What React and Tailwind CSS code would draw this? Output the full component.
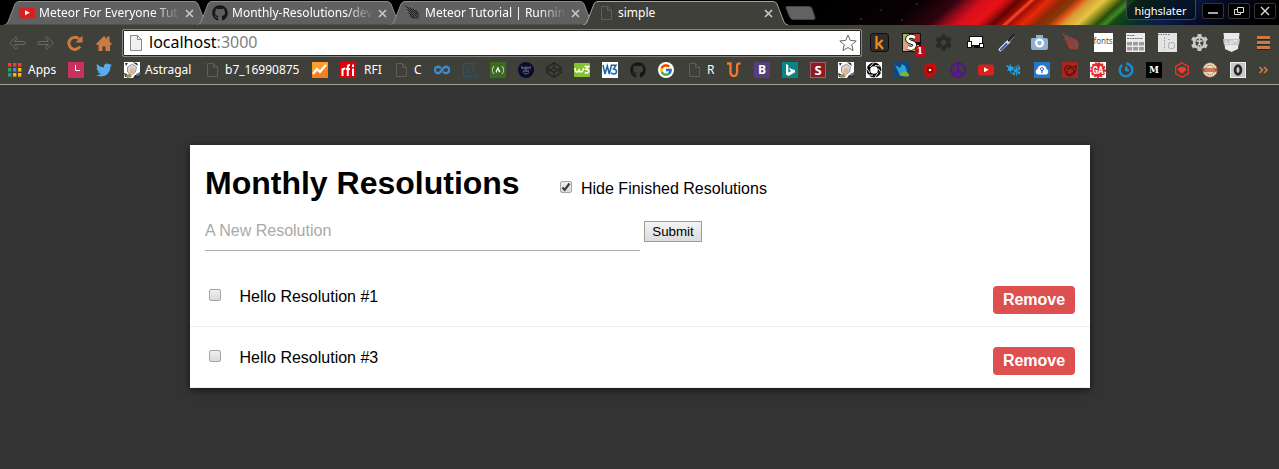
import React from "react";
import { FaTwitter, FaGithub, FaFreeCodeCamp, FaCodepen, FaCog } from "react-icons/fa";
import { FcGoogle } from "react-icons/fc";

const Svg = ({ s = "h-4 w-4", vb = "0 0 16 16", children }) => (
  <svg viewBox={vb} className={s + " shrink-0"} fill="none">{children}</svg>
);

const Letter = ({ bg, fg = "#fff", t, size = 12, x = 8, y = 12.3, font = "Open Sans, sans-serif", rx = 0, weight = 700 }) => (
  <Svg>
    <rect width="16" height="16" rx={rx} fill={bg} />
    <text x={x} y={y} fontSize={size} fontWeight={weight} fill={fg} textAnchor="middle" fontFamily={font}>{t}</text>
  </Svg>
);

const Doc = () => (
  <Svg><path d="M3.5 1.5h6l4 4v9h-10zM9.5 1.5v4h4" stroke="#5d5e58" /></Svg>
);

const YouTube = () => (
  <Svg>
    <rect y="2.5" width="16" height="11" rx="2" fill="#d9201f" />
    <path d="M6 5.2v5l4.8-2.5z" fill="#fff" />
  </Svg>
);

const Meteor = ({ c = "#171717", s = "h-4 w-4" }) => (
  <Svg s={s}>
    <path d="M.5.5l13 13M4 2l9.800 10M2 4l9.800 9.800M7.500 3.500l6.300 6.700M3.500 7.500l6.500 6.300M10.500 5l3 3.300M5 10.500l3.200 3" stroke={c} strokeWidth=".95" />
  </Svg>
);

const Painter = () => (
  <Svg>
    <rect width="16" height="16" fill="#fff" />
    <path d="M1 1h3L2 4zM9 0l4 1 1 3-3-2zM0 11l3 1 1 3H1zM11 13l5 0v3H9z" fill="#35332f" />
    <path d="M3.500 5l5-3 4 3-1 5-4 3-4-3z" fill="#d3d4d8" stroke="#77757a" strokeWidth=".7" />
    <path d="M6 7l3-1 2 3-2 2-3 0z" fill="#e3b48d" />
    <path d="M1 13l5-1 2 3-5 1z" fill="#9a8b51" />
    <path d="M12 12l4-2v3l-3 1z" fill="#5577a8" />
  </Svg>
);

const Apps = () => (
  <Svg>
    {["#ea4335", "#ea4335", "#ea4335", "#22a565", "#4285f4", "#fbb405", "#22a565", "#fbb405", "#fbb405"].map((c, i) => (
      <rect key={i} x={2 + (i % 3) * 5} y={1 + Math.floor(i / 3) * 5} width="3.4" height="3.6" fill={c} />
    ))}
  </Svg>
);

const Peace = () => (
  <Svg><g stroke="#5b0f96" strokeWidth="1.8"><circle cx="8" cy="8" r="7" /><path d="M8 1v14M8 8l-5 5M8 8l5 5" /></g></Svg>
);

const bookmarks = [
  { w: "w-[50px]", label: "Apps", gap: "gap-1.5", icon: <Apps /> },
  { icon: (
    <Svg><rect width="16" height="16" fill="#c9315a" /><path d="M7.5 3v5.5h4.5" stroke="#fff" /></Svg>
  ) },
  { icon: <FaTwitter className="h-4 w-4 shrink-0 text-[#55acee]" /> },
  { w: "w-[68px]", label: "Astragal", icon: <Painter /> },
  { w: "w-[96px]", label: "b7_16990875", icon: <Doc /> },
  { icon: (
    <Svg><rect width="16" height="16" fill="#f48120" /><path d="M0 0h16v4L0 12z" fill="#f9a02c" /><path d="M1 12l4-5 3 3 6-7" stroke="#fff" strokeWidth="2.2" /></Svg>
  ) },
  { w: "w-[41px]", label: "RFI", gap: "gap-2", icon: (
    <Svg>
      <rect width="16" height="16" fill="#e2000b" />
      <path d="M2.500 14V6.500M2.500 8.500q0-2 3-2M7.800 14V5q0-2 2.200-2M6 7h4M13 6.500V14M13 2.500v2.500" stroke="#fff" strokeWidth="2" />
    </Svg>
  ) },
  { w: "w-[29px]", label: "C", icon: <Doc /> },
  { icon: (
    <Svg><path d="M7 6.200Q5.700 4.800 4 4.800a3.200 3.200 0 0 0 0 6.400c3.500 0 4.500-6.400 8-6.400a3.200 3.200 0 0 1 0 6.400Q10.300 11.200 9 9.800" stroke="#3f8bc9" strokeWidth="2.400" /></Svg>
  ) },
  { icon: (
    <Svg>
      <path d="M10.500 14.500h-9V1.500h10v8.500M12.500 14.500H16" stroke="#2a536b" strokeWidth="1.300" />
      <path d="M8.500 6q-3.500-1-3.500 2.200T8.500 10.500" stroke="#2a536b" strokeWidth="1.500" />
    </Svg>
  ) },
  { icon: (
    <span className="flex h-4 w-4 items-center justify-center bg-[#3c6a20]"><FaFreeCodeCamp className="h-3 w-3 text-white" /></span>
  ) },
  { icon: (
    <Svg>
      <circle cx="8" cy="8" r="8" fill="#0b0a33" />
      <path d="M3 3.500l2 1.500q3-1 6 0l2-1.500v3l-2 1v3.500q-3 3-6 0V7.500l-2-1z" fill="#50535c" />
      <path d="M5 7l2 1M11 7l-2 1M6 11q2-1.500 4 0" stroke="#0b0a33" strokeWidth="1.200" />
    </Svg>
  ) },
  { icon: <FaCodepen className="h-4 w-4 shrink-0 text-[#262723]" /> },
  { icon: (
    <Svg>
      <rect y="1" width="16" height="14" rx="1" fill="#88c130" />
      <path d="M1 6q0 4 2 4t2-3q0 3 2 3t2.500-4M10.500 4.500h4L12 7.300q2.700 0 2.700 2t-4 1.800" stroke="#fff" strokeWidth="1.500" />
    </Svg>
  ) },
  { icon: (
    <Svg>
      <rect width="16" height="16" fill="#fff" />
      <path d="M1 3l2 9 2.300-8 2 8L9.500 3M9 3.300h5L11.500 7q3 .2 3 2.500T12 12t-2.500-1.500" stroke="#1565a9" strokeWidth="1.500" />
    </Svg>
  ) },
  { icon: <FaGithub className="h-4 w-4 shrink-0 text-[#171717]" /> },
  { icon: (
    <span className="flex h-4 w-4 items-center justify-center rounded-full bg-white"><FcGoogle className="h-3.5 w-3.5" /></span>
  ) },
  { w: "w-[28px]", label: "R", icon: <Doc /> },
  { icon: (
    <Svg><path d="M1 1.500h3.500V9.500q0 4.500 3.300 4.500t3.300-4.500V3q0-1.500 3.500-1.700" stroke="#f4792a" strokeWidth="2.300" /></Svg>
  ) },
  { icon: <Letter bg="#563d7c" t="B" rx={2} /> },
  { icon: (
    <Svg><rect width="16" height="16" fill="#0a8484" /><path d="M4 2l2.300 1v7.500l3-1.500-1.500-1L7 6l6 2.200v2L6.500 14 4 12.500z" fill="#fff" /></Svg>
  ) },
  { icon: (
    <Svg>
      <rect width="16" height="16" fill="#8b1c22" /><rect x=".5" y=".5" width="15" height="15" stroke="#c9a0a2" strokeDasharray="1 1" />
      <text x="8" y="12.600" fontSize="13" fontWeight="700" fill="#fff" textAnchor="middle" fontFamily="Open Sans, sans-serif">S</text>
    </Svg>
  ) },
  { icon: <Painter /> },
  { icon: (
    <Svg>
      <rect width="16" height="16" fill="#fff" />
      <circle cx="8" cy="8" r="5.600" stroke="#0c0c0c" strokeWidth="3.600" />
      <path d="M8 .5L4 5M14.500 4L9 3.500M15.500 11L12 6.500M9 15.500l3-5M2 13l5 .2M.5 6l3.500 5" stroke="#fff" strokeWidth=".9" />
    </Svg>
  ) },
  { icon: (
    <Svg>
      <rect width="16" height="16" fill="#16457c" />
      <path d="M1 3l5 3 2-4 3 2 2 5-3 4-4 1-2-5z" fill="#27a3e3" /><path d="M6 13q3-5 6-3.500T15 14q-4 1.500-9-1z" fill="#7db62c" />
    </Svg>
  ) },
  { icon: (
    <Svg>
      <path d="M14 1Q8 0 4 2.500T2.500 9q0 3 3 4.500-2 1-4 1 8 2.500 11.500-2.500t0-8.500q0-1.500 1-2.500z" fill="#c80b0b" />
      <circle cx="8" cy="8" r="3.200" fill="#8c0505" /><circle cx="8" cy="8" r="1.300" fill="#fff" />
    </Svg>
  ) },
  { icon: <Peace /> },
  { icon: <YouTube /> },
  { icon: (
    <Svg>
      <g stroke="#2599d6" strokeWidth=".9"><path d="M1 4l13 8M1 9l12-6M4.500 2v9M6 7l8 0M5 12l9-6M10.500 5v9M13 4v8" /></g>
      <g fill="#2ba0e0"><circle cx="4.500" cy="6.500" r="2.600" /><circle cx="10" cy="9" r="1.800" /><circle cx="13" cy="6" r="1.300" /><circle cx="8" cy="12" r="1.200" /><circle cx="13" cy="11" r="1.200" /><circle cx="1.500" cy="4" r="1" /></g>
    </Svg>
  ) },
  { icon: (
    <Svg>
      <rect width="16" height="16" fill="#2878c9" />
      <path d="M3.500 12.500a3 3 0 0 1 0-5.500 4.600 4.600 0 0 1 9 0 3 3 0 0 1 0 5.500z" fill="#fff" />
      <path d="M8 11V8" stroke="#2878c9" strokeWidth="1.300" /><circle cx="8" cy="7" r="1.500" stroke="#2878c9" />
    </Svg>
  ) },
  { icon: (
    <Svg>
      <rect width="16" height="16" rx="1" fill="#a9261f" />
      <path d="M2 8q2-6 6-4t6 0q0 9-6 10-5-1-5-6M5 7q3-3 6 0t-2 5-4-3 4-2" stroke="#5c1210" strokeWidth="1.100" />
    </Svg>
  ) },
  { icon: (
    <Svg>
      <rect width="16" height="16" fill="#fff" />
      <circle cx="8" cy="8" r="6.900" fill="#e3272d" /><circle cx="8" cy="8" r="7.200" stroke="#e3272d" strokeWidth="1.500" strokeDasharray="2 1.400" />
      <text x="8" y="11.600" fontSize="10" fontWeight="700" fill="#fff" textAnchor="middle" textLength="11" lengthAdjust="spacingAndGlyphs" fontFamily="Roboto, sans-serif">GA</text>
    </Svg>
  ) },
  { icon: (
    <Svg><path d="M4.200 3A6.300 6.300 0 1 0 12 3.200M8 1.500q2.200 0 4 1.700M8.300 9V4.500M8 8.300h3" stroke="#1c8ac7" strokeWidth="2.500" /></Svg>
  ) },
  { icon: <Letter bg="#000" t="M" size={9} y={11.3} font="DejaVu Serif, serif" /> },
  { icon: (
    <Svg><path d="M8 .8l6.300 3.600v7.200L8 15.200l-6.300-3.600V4.400z" stroke="#e5352c" strokeWidth="1.400" /><path d="M5.500 5h5l2 2.500L8 11.800 3.500 7.500z" fill="#f13b31" /></Svg>
  ) },
  { icon: (
    <Svg>
      <circle cx="8" cy="8" r="7.200" fill="#e8dcc0" stroke="#b06b3a" strokeDasharray="1.500 1" />
      <circle cx="8" cy="8" r="4.700" stroke="#7b4c36" strokeDasharray="1 1" /><path d="M1 6.300h14v3.400H1z" fill="#c34d31" /><path d="M3 8h10" stroke="#f0d7c0" strokeDasharray="1 .7" />
    </Svg>
  ) },
  { icon: (
    <Svg>
      <rect width="16" height="16" fill="#c9c9c9" /><rect x=".5" y=".5" width="15" height="15" stroke="#eee" />
      <ellipse cx="8" cy="8" rx="2.900" ry="4.300" stroke="#292929" strokeWidth="2.800" />
    </Svg>
  ) },
];

const S20 = "h-[19px] w-[19px]";
const extensions = [
  <Svg s={S20} vb="0 0 19 19">
    <rect x=".5" y=".5" width="18" height="18" rx="3" fill="#2d2d2d" stroke="#0c0c0c" />
    <path d="M6.500 3v13M12.500 7l-5 5M8.500 10.500l4.500 5.500" stroke="#f28a1a" strokeWidth="2.200" />
  </Svg>,
  <span className="relative">
    <Svg s={S20} vb="0 0 19 19">
      <rect width="19" height="19" fill="#111" /><path d="M1 1h9v8H1z" fill="#a7b85c" /><path d="M10 1h8v8h-8z" fill="#b93528" /><path d="M1 9h8v9H1z" fill="#e0a284" /><path d="M9 12h8v6H9z" fill="#e9c40c" />
      <path d="M13 4.500Q7 2 5.800 5t3.500 4.200 3 4.300-6.800 1" stroke="#111" strokeWidth="4.600" /><path d="M13 4.500Q7 2 5.800 5t3.500 4.200 3 4.300-6.800 1" stroke="#fff" strokeWidth="3" />
    </Svg>
    <span className="absolute left-[13px] top-[13px] flex h-[11px] w-[11px] items-center justify-center rounded-xs bg-[#b30f22] font-['DejaVu_Serif',serif] text-[9px] font-bold leading-none text-white">1</span>
  </span>,
  <FaCog className="h-[17px] w-[17px] text-[#2a2a28]" />,
  <Svg s={S20} vb="0 0 19 19">
    <path d="M8 12h5v3H8z" fill="#0c0c0c" />
    <g fill="#fff" stroke="#0c0c0c"><rect x="3.500" y="3.500" width="13" height="9" /><rect x="1.500" y="8.500" width="4" height="6" /><rect x="13.500" y="10.500" width="4" height="4" /></g>
    <path d="M6 10h7v2H6z" fill="#fff" />
  </Svg>,
  <Svg s={S20} vb="0 0 19 19">
    <path d="M2.500 16.500l8-8" stroke="#dce4f4" strokeWidth="3.600" strokeLinecap="round" /><path d="M3 16.500l5.500-5.500" stroke="#3858b9" strokeWidth="2.200" strokeLinecap="round" /><path d="M11 7.500l4.500-5.500" stroke="#23272d" strokeWidth="2.600" strokeLinecap="round" /><path d="M11.500 8.500l5-5" stroke="#8d959d" strokeWidth=".8" />
  </Svg>,
  <Svg s={S20} vb="0 0 19 19">
    <path d="M2 5h4V2h7v3h3q2 0 2 2v8q0 2-2 2H3q-2 0-2-2V7q0-2 1-2z" fill="#8fb0d0" /><circle cx="9.500" cy="10" r="3.400" stroke="#fff" strokeWidth="2.200" />
  </Svg>,
  <Meteor c="#b0403f" s={S20} />,
  <span className="flex h-[19px] w-[19px] justify-center overflow-hidden bg-white font-['Noto_Sans',sans-serif] text-[8px] leading-[15px] text-[#555]">fonts</span>,
  <Svg s={S20} vb="0 0 19 19">
    <rect width="19" height="19" fill="#ececec" /><path d="M1 2.500h8M1 5.500h16" stroke="#777" strokeDasharray="2 .6" />
    <g fill="#9c9c9c"><path d="M1 9h5v3.500H1zM7 9h5v3.500H7zM13 9h5v3.500h-5zM1 14h5v3.500H1zM7 14h5v3.500H7zM13 14h5v3.500h-5z" /></g>
  </Svg>,
  <Svg s={S20} vb="0 0 19 19">
    <rect width="19" height="19" fill="#e4e4e4" /><path d="M0 1.500h12" stroke="#777" strokeDasharray="1.500 1" /><path d="M6.500 4v13M10 6.500h3" stroke="#aaa" strokeDasharray="2 1" /><rect x="10.500" y="9.500" width="6" height="6" rx="2" stroke="#aaa" />
  </Svg>,
  <Svg s={S20} vb="0 0 19 19">
    <g fill="#c9c9c9"><rect x="7.500" y="1" width="4" height="17" /><rect x="7.500" y="1" width="4" height="17" transform="rotate(60 9.500 9.500)" /><rect x="7.500" y="1" width="4" height="17" transform="rotate(120 9.500 9.500)" /><circle cx="9.500" cy="9.500" r="6.600" /></g>
    <circle cx="9.500" cy="9.500" r="4" fill="#454640" /><path d="M6.500 8h6M9.500 8v2.500l-1.500 2.500M9.500 10.500l1.500 2.500M9.500 5.500v1.500" stroke="#ddd" strokeWidth="1.300" />
  </Svg>,
  <Svg s={S20} vb="0 0 19 19">
    <path d="M1.500 0h16l-1.500 16-6.500 3L3 16z" fill="#e9e9e9" /><path d="M1 6h17l-1 6H2z" fill="#c4c4c4" />
    <path d="M4 7.500v3h2M8 7.500v3h2v-3M12 10.500v-3h3v3" stroke="#eee" />
  </Svg>,
  <Svg s="h-[16px] w-[15px]" vb="0 0 15 16">
    <path d="M1 1h13v3H1zM1 6h13v3H1zM1 11h13v3H1z" fill="#cb7b41" /><path d="M1 4.500h13M1 9.500h13M1 14.500h13" stroke="#272721" />
  </Svg>,
];

const tabs = [
  { title: "Meteor For Everyone Tut", icon: <YouTube /> },
  { title: "Monthly-Resolutions/dev", icon: <FaGithub className="h-4 w-4 shrink-0 text-[#171717]" /> },
  { title: "Meteor Tutorial | Runnin", icon: <Meteor /> },
  { title: "simple", active: true, icon: <Doc /> },
];

const Tab = ({ title, icon, active }) => (
  <div className={"relative -mr-[14px] h-[25px] w-[207px] shrink-0 " + (active ? "z-10" : "")}>
    <svg viewBox="0 0 207 25" className="absolute inset-0 h-[25px] w-[207px]" fill="none">
      <path
        d="M1 25q3-.5 4-3L12 4q1-2.500 4-2.500h175q3 0 4 2.500l7 18q1 2.500 4 3"
        fill={active ? "#3f4039" : "#606060"}
        stroke={active ? "#a4a49f" : "#8c8c8c"}
      />
      {!active && <path d="M2 24.500h203" stroke="#50514b" />}
    </svg>
    <div className="relative flex h-[25px] items-center gap-1 pl-[16px] pt-px">
      {icon}
      <span className={"w-[142px] whitespace-nowrap text-[12px] leading-4 text-white " + (active ? "" : "[mask-image:linear-gradient(to_right,#000_80%,transparent)]")}>{title}</span>
      <svg viewBox="0 0 9 9" className="h-[9px] w-[9px] shrink-0"><path d="M1 1l7 7M8 1L1 8" stroke="#c8c8c8" strokeWidth="1.600" /></svg>
    </div>
  </div>
);

const Theme = () => (
  <svg viewBox="0 0 460 25" preserveAspectRatio="none" className="absolute right-0 top-0 h-[25px] w-[460px]">
    <defs>
      <linearGradient id="glow" gradientUnits="userSpaceOnUse" x1="0" y1="0" x2="460" y2="0" gradientTransform="skewX(-48)">
        <stop offset="0" stopColor="#000" />
        <stop offset=".22" stopColor="#080103" />
        <stop offset=".30" stopColor="#30040e" />
        <stop offset=".33" stopColor="#900a1c" />
        <stop offset=".36" stopColor="#d80f1c" />
        <stop offset=".40" stopColor="#e81214" />
        <stop offset=".42" stopColor="#a50b10" />
        <stop offset=".435" stopColor="#5e0504" />
        <stop offset=".455" stopColor="#a00c05" />
        <stop offset=".463" stopColor="#ff4a28" />
        <stop offset=".473" stopColor="#a00e04" />
        <stop offset=".50" stopColor="#e82a0a" />
        <stop offset=".53" stopColor="#8c2803" />
        <stop offset=".555" stopColor="#843a08" />
        <stop offset=".572" stopColor="#e24e14" />
        <stop offset=".588" stopColor="#d59a30" />
        <stop offset=".62" stopColor="#e6c644" />
        <stop offset=".642" stopColor="#8a8a1c" />
        <stop offset=".662" stopColor="#254c0e" />
        <stop offset=".68" stopColor="#3f8a28" />
        <stop offset=".692" stopColor="#154a12" />
        <stop offset=".74" stopColor="#08302a" />
        <stop offset=".80" stopColor="#081e48" />
        <stop offset=".88" stopColor="#050b26" />
        <stop offset="1" stopColor="#000" />
      </linearGradient>
    </defs>
    <rect width="460" height="25" fill="url(#glow)" />
    <g fill="#998"><circle cx="42" cy="19" r=".6" /><circle cx="62" cy="10" r=".5" /><circle cx="83" cy="20" r=".5" /><circle cx="98" cy="4" r=".6" /><circle cx="256" cy="12" r=".7" /></g>
  </svg>
);

const WinButton = ({ children }) => (
  <span className="flex h-4 w-[22px] items-center justify-center rounded-xs border border-[#333] bg-black">{children}</span>
);

const Check = ({ checked }) => (
  <span className="flex h-3 w-3 shrink-0 items-center justify-center rounded-xs border border-[#a5a5a5] bg-linear-to-b from-[#eeeeee] to-[#dadada]">
    {checked && <svg viewBox="0 0 10 10" className="h-2.5 w-2.5 shrink-0" fill="none"><path d="M1.500 5.500l2.200 2.300L8.500 1.500" stroke="#3c3c3c" strokeWidth="2.200" /></svg>}
  </span>
);

const Arrow = ({ flip }) => (
  <svg viewBox="0 0 18 16" className={"h-4 w-[18px] " + (flip ? "-scale-x-100" : "")} fill="none">
    <path d="M1.500 8L8 1.800l1.500 1.500L6.500 6.500H16q1 0 1 1.500t-1 1.500H6.500l3 3.200L8 14.200z" stroke="#6d6860" />
  </svg>
);

export default function App() {
  return (
    <div className="flex h-[469px] w-[1279px] flex-col overflow-hidden bg-[#333] font-['Liberation_Sans',Arial,sans-serif]">
      <header className="flex h-[85px] shrink-0 flex-col border-b border-[#a0a19b] bg-[#3f4039] font-['Noto_Sans',sans-serif]">
        <div className="relative flex h-[25px] shrink-0 bg-black pl-[3px]">
          <Theme />
          {tabs.map((t) => <Tab key={t.title} {...t} />)}
          <svg viewBox="0 0 32 16" className="relative ml-[9px] mt-[5px] h-4 w-8" fill="none">
            <path d="M3 1.500h22q2 0 3 2l3 9q.5 2-1.500 2H9q-2 0-3-2L2 3q-.5-1.500 1-1.500z" fill="#626262" stroke="#454545" />
          </svg>
          <div className="relative ml-auto flex items-start gap-[6px] pt-[3px]">
            <span className="-mt-[3px] flex h-5 w-[70px] items-center justify-center rounded-b border border-t-0 border-[#3d4750] bg-[#050d18]/60 pr-px pt-[3px] text-[11px] text-white">highslater</span>
            <div className="flex gap-1 pr-[3px]">
              <WinButton><svg viewBox="0 0 10 10" className="h-2.5 w-2.5"><path d="M0 7h10" stroke="#ddd" strokeWidth="1.500" /></svg></WinButton>
              <WinButton><svg viewBox="0 0 10 10" className="h-2.5 w-2.5" fill="none"><path d="M3.500 6.500v-5h6v5zM6.500 6.500v2h-6v-5h3" stroke="#ddd" /></svg></WinButton>
              <WinButton><svg viewBox="0 0 10 10" className="h-2.5 w-2.5"><path d="M1 1l8 8M9 1L1 9" stroke="#ddd" strokeWidth="1.400" /></svg></WinButton>
            </div>
          </div>
        </div>
        <div className="flex h-[35px] shrink-0 items-center">
          <nav className="flex w-[122px] items-center pl-2">
            <Arrow />
            <span className="ml-[11px] flex"><Arrow flip /></span>
            <svg viewBox="0 0 16 16" className="ml-3 h-4 w-4" fill="none"><path d="M13 11.500A6 6 0 1 1 12 4" stroke="#cb7b41" strokeWidth="3" /><path d="M15.500.5V7.500H8.500z" fill="#cb7b41" /></svg>
            <svg viewBox="0 0 16 16" className="ml-[13px] h-4 w-4"><path d="M8 1l3 3V1.500h2.500v5L16 9l-1 1-1-.5V16H9.500v-4.500h-3V16H2.500V9.500L1 10 0 9z" fill="#cb7b41" /></svg>
          </nav>
          <div className="flex h-[28px] w-[740px] items-center rounded-xs border border-[#85867f] bg-white px-[7px] pb-0.5 shadow-[inset_0_0_0_1px_#262722]">
            <svg viewBox="0 0 12 16" className="mt-0.5 h-4 w-3"><path d="M.5.500h7l4 4v11H.500zM7.500.500v4h4" fill="#f1f1f1" stroke="#888" /></svg>
            <span className="ml-[7px] text-[16px] leading-6 text-black">localhost<span className="text-[#808080]">:3000</span></span>
            <svg viewBox="0 0 18 18" className="-mr-[3px] ml-auto mt-0.5 h-[18px] w-[18px]"><path d="M9 1l2.300 5.400 5.900.5-4.500 3.900 1.400 5.800L9 13.500l-5.100 3.100 1.400-5.800L.8 6.900l5.900-.5z" fill="#fff" stroke="#666" /></svg>
          </div>
          <div className="flex pl-[1px]">
            {extensions.map((e, i) => <span key={i} className="flex w-8 shrink-0 items-center justify-center">{e}</span>)}
          </div>
        </div>
        <div className="flex h-5 shrink-0 items-center gap-3 pl-[6px]">
          {bookmarks.map((b, i) => (
            <span key={i} className={"flex shrink-0 items-center whitespace-nowrap text-[12px] leading-4 text-white " + (b.gap || "gap-[5px]") + " " + (b.w || "w-4")}>
              {b.icon}{b.label}
            </span>
          ))}
          <svg viewBox="0 0 10 8" className="h-2 w-2.5" fill="none"><path d="M1.500 1l3 3-3 3M6 1l3 3-3 3" stroke="#cb7b41" strokeWidth="1.600" /></svg>
        </div>
      </header>

      <main className="ml-[190px] mt-[60px] h-[243px] w-[900px] bg-white text-[16px] text-black shadow-[0_2px_8px_rgba(0,0,0,0.6)]">
        <div className="flex h-[76px] items-center px-[15px]">
          <h1 className="w-[355px] text-[32px] font-bold leading-9">Monthly Resolutions</h1>
          <label className="flex items-center gap-[9px] pt-[11px]">
            <span className="-mt-[3px] flex"><Check checked /></span>
            Hide Finished Resolutions
          </label>
        </div>
        <form className="flex h-[45px] items-start gap-1 px-[15px]">
          <div className="flex h-[30px] w-[435px] items-start border-b border-[#b0b0b0] leading-5 text-[#a9a9a9]">A New Resolution</div>
          <button type="button" className="flex h-[21px] w-[58px] items-center justify-center border border-[#9c9c9c] bg-linear-to-b from-[#f4f4f4] to-[#dcdcdc] text-[13.333px]">Submit</button>
        </form>
        <ul>
          {["Hello Resolution #1", "Hello Resolution #3"].map((r) => (
            <li key={r} className="flex h-[61px] items-start border-b border-[#eee] pl-[19px] pr-[15px] pt-5">
              <span className="flex pt-[3px]"><Check /></span>
              <span className="ml-[18.500px] leading-[22px]">{r}</span>
              <button type="button" className="ml-auto h-7 w-[82px] rounded bg-[#de4f4f] font-bold text-white">Remove</button>
            </li>
          ))}
        </ul>
      </main>
    </div>
  );
}
